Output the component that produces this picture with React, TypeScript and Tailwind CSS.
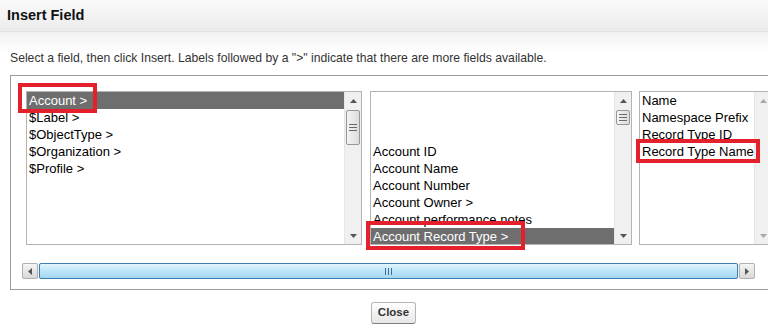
import React from "react";

const font = { fontFamily: '"Liberation Sans", Arial, sans-serif' };

function VScroll({ thumbTop, thumbH, disabled }: { thumbTop?: number; thumbH?: number; disabled?: boolean }) {
  return (
    <div className="relative w-[17px] shrink-0 h-full bg-[#f0f0f0] border-l border-[#e6e6e6] flex flex-col justify-between">
      <div className="h-[17px] flex items-center justify-center">
        <svg width="7" height="4" viewBox="0 0 7 4">
          <path d="M0 4 L3.5 0 L7 4 Z" fill={disabled ? "#a8a8a8" : "#555"} />
        </svg>
      </div>
      <div className="h-[17px] flex items-center justify-center">
        <svg width="7" height="4" viewBox="0 0 7 4">
          <path d="M0 0 L3.5 4 L7 0 Z" fill={disabled ? "#a8a8a8" : "#555"} />
        </svg>
      </div>
      {thumbTop !== undefined && (
        <div
          className="absolute left-[1px] w-[14px] rounded-[2px] border border-[#979797] bg-gradient-to-r from-[#f4f4f4] to-[#dcdcdc] flex items-center justify-center"
          style={{ top: thumbTop, height: thumbH }}
        >
          <svg width="8" height="7" viewBox="0 0 8 7">
            <path d="M0 0.5 H8 M0 3.5 H8 M0 6.5 H8" stroke="#6a6a6a" strokeWidth="1" />
          </svg>
        </div>
      )}
    </div>
  );
}

function Row({ text, selected }: { text?: string; selected?: boolean }) {
  return (
    <div
      className={
        "h-[17px] leading-[18px] text-[13px] pl-[2px] whitespace-nowrap " +
        (selected ? "bg-[#6e6e6e] text-white" : "text-black")
      }
    >
      {text ?? "\u00a0"}
    </div>
  );
}

export default function App() {
  return (
    <div className="w-[768px] h-[330px] overflow-hidden bg-white relative" style={font}>
      {/* Title bar */}
      <div className="h-[32px] bg-gradient-to-b from-[#fafafa] to-[#ebebeb] border-b border-[#e2e2e2] flex items-center pl-[7px]">
        <span className="text-[14.5px] font-bold text-[#111]">Insert Field</span>
      </div>
      {/* body */}
      <div className="bg-gradient-to-b from-[#f1f1f1] via-white to-white">
        <div className="h-[43px] flex items-end pb-[8px] pl-[10px] text-[12.2px] text-[#333]">
          Select a field, then click Insert. Labels followed by a "&gt;" indicate that there are more fields available.
        </div>
      </div>
      <div className="ml-[10px] w-[800px] h-[215px] border border-[#9a9a9a] pt-[15px] pl-[15px]">
        <div className="flex h-[154px]">
          {/* left list */}
          <div className="w-[336px] h-full border border-[#b4b4b4] flex bg-white">
            <div className="flex-1 overflow-hidden">
              <Row text="Account >" selected />
              <Row text="$Label >" />
              <Row text="$ObjectType >" />
              <Row text="$Organization >" />
              <Row text="$Profile >" />
            </div>
            <VScroll thumbTop={18} thumbH={35} />
          </div>
          {/* middle list */}
          <div className="ml-[8px] w-[262px] h-full border border-[#b4b4b4] flex bg-white">
            <div className="flex-1 overflow-hidden">
              <Row />
              <Row />
              <Row />
              <Row text="Account ID" />
              <Row text="Account Name" />
              <Row text="Account Number" />
              <Row text="Account Owner >" />
              <Row text="Account performance notes" />
              <Row text="Account Record Type >" selected />
            </div>
            <VScroll thumbTop={18} thumbH={15} />
          </div>
          {/* right list */}
          <div className="ml-[7px] w-[133px] h-full border border-[#b4b4b4] flex bg-white">
            <div className="flex-1 overflow-hidden">
              <Row text="Name" />
              <Row text="Namespace Prefix" />
              <Row text="Record Type ID" />
              <Row text="Record Type Name" />
            </div>
            <VScroll disabled />
          </div>
        </div>
        {/* horizontal scrollbar */}
        <div className="mt-[18px] -ml-[4px] w-[733px] h-[16px] bg-[#f0f0f0] flex items-center">
          <div className="w-[16px] h-[16px] border border-[#b0b0b0] rounded-[2px] bg-gradient-to-b from-[#f5f5f5] to-[#d9d9d9] flex items-center justify-center">
            <svg width="4" height="7" viewBox="0 0 4 7">
              <path d="M4 0 L0 3.5 L4 7 Z" fill="#555" />
            </svg>
          </div>
          <div className="ml-[1px] flex-1 h-[16px] rounded-[2px] border border-[#3c7fb1] bg-gradient-to-b from-[#e3f4fc] via-[#bde6f8] to-[#a4d7f0] flex items-center justify-center">
            <svg width="8" height="7" viewBox="0 0 8 7">
              <path d="M0.5 0 V7 M3.5 0 V7 M6.5 0 V7" stroke="#3a6e96" strokeWidth="1" />
            </svg>
          </div>
          <div className="ml-[1px] w-[16px] h-[16px] border border-[#b0b0b0] rounded-[2px] bg-gradient-to-b from-[#f5f5f5] to-[#d9d9d9] flex items-center justify-center">
            <svg width="4" height="7" viewBox="0 0 4 7">
              <path d="M0 0 L4 3.5 L0 7 Z" fill="#555" />
            </svg>
          </div>
        </div>
      </div>
      {/* footer */}
      <div className="flex justify-center pt-[12px]">
        <button className="ml-[19px] w-[45px] h-[22px] rounded-[3px] border border-[#b5b5b5] border-b-[#7f7f7f] bg-gradient-to-b from-white to-[#e6e6e6] text-[11.5px] font-bold text-[#333] leading-none">
          Close
        </button>
      </div>

      {/* red highlight overlays */}
      <div className="absolute left-[18px] top-[83px] w-[79px] h-[30px] border-[4px] border-[#e3202b]" />
      <div className="absolute left-[366px] top-[221px] w-[159px] h-[29px] border-[4px] border-[#e3202b]" />
      <div className="absolute left-[636px] top-[139px] w-[124px] h-[24px] border-[4px] border-[#e3202b]" />
    </div>
  );
}
